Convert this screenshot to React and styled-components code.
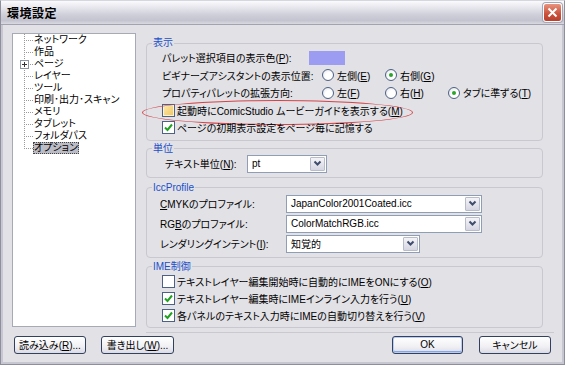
import styled, { createGlobalStyle } from "styled-components";

const GlobalStyle = createGlobalStyle`
  html, body { margin: 0; padding: 0; }
  body {
    width: 565px;
    height: 365px;
    overflow: hidden;
    font-family: "Liberation Sans", "Noto Sans CJK JP", sans-serif;
    font-size: 10px;
    font-feature-settings: "palt";
    color: #000;
  }
  * { box-sizing: border-box; }
`;

const Window = styled.div`
  width: 565px;
  height: 365px;
  display: flex;
  flex-direction: column;
  background: #c7c7d1;
  border: 1px solid #8e8e9c;
  border-top-color: #d6d6de;
`;

const TitleBar = styled.div`
  height: 24px;
  flex: none;
  display: flex;
  align-items: center;
  justify-content: space-between;
  padding: 0 2px 0 6px;
  background: linear-gradient(
    to bottom,
    #fbfbfd 0%,
    #e9e9ef 25%,
    #cfcfda 60%,
    #c4c4d0 85%,
    #d9d9e1 100%
  );
  border-bottom: 1px solid #a2a2b0;
`;

const Title = styled.span`
  font-family: "Noto Sans CJK JP", sans-serif;
  font-size: 12px;
  font-weight: bold;
  letter-spacing: 0.5px;
`;

const CloseButton = styled.span`
  width: 19px;
  height: 19px;
  display: flex;
  align-items: center;
  justify-content: center;
  border: 1px solid #fff;
  border-radius: 3px;
  background: linear-gradient(to bottom, #e8947f, #c9503a 60%, #b8402c);
  box-shadow: 0 0 0 1px #a6a6b4;
`;

const Body = styled.div`
  flex: 1;
  margin: 0 2px 2px;
  background: #e2e1e6;
  padding: 8px 10px 0 9px;
  display: flex;
  flex-direction: column;
`;

const Main = styled.div`
  display: flex;
  align-items: flex-start;
  gap: 10px;
`;

const Tree = styled.div`
  width: 124px;
  height: 294px;
  flex: none;
  background: #fff;
  border: 1px solid #a4abb7;
`;

const TreeItem = styled.div`
  display: flex;
  align-items: center;
  height: 12px;
  line-height: 12px;
  white-space: nowrap;
  overflow: hidden;
`;

const Connector = styled.span`
  width: 20px;
  height: 12px;
  flex: none;
  display: flex;
  align-items: center;
  background:
    repeating-linear-gradient(to bottom, #9a9a9a 0 1px, transparent 1px 2px)
      11px 0 / 1px ${(p) => (p.$last ? "7px" : "100%")} no-repeat,
    repeating-linear-gradient(to right, #9a9a9a 0 1px, transparent 1px 2px)
      11px 6px / 9px 1px no-repeat;
`;

const PlusBox = styled.span`
  width: 9px;
  height: 9px;
  margin-left: 7px;
  border: 1px solid #8c96a2;
  background: #fff;
  display: flex;
`;

const TreeLabel = styled.span`
  display: inline-block;
  height: 12px;
  line-height: 12px;
  padding: 0 1px;
  background: ${(p) => (p.$selected ? "#bcbcc6" : "transparent")};
  outline: ${(p) => (p.$selected ? "1px dotted #444" : "none")};
  outline-offset: -1px;
`;

const Pane = styled.div`
  flex: 1;
  padding: 4px 11px 4px 0;
  border-bottom: 1px solid #c9c9cf;
  display: flex;
  flex-direction: column;
`;

const Group = styled.fieldset`
  margin: ${(p) => p.$top || 0}px 0 0;
  padding: 0 4px ${(p) => p.$bottom || 3}px 4px;
  border: 1px solid #c9c8d0;
  border-radius: 4px;
  min-width: 0;
`;

const Legend = styled.legend`
  padding: 0 1px;
  margin-left: 1px;
  line-height: 12px;
  font-size: 10px;
  color: #1a4fc8;
`;

const Content = styled.div`
  padding-left: ${(p) => p.$indent}px;
`;

const Row = styled.div`
  position: relative;
  display: flex;
  align-items: center;
  height: ${(p) => p.$h}px;
  white-space: nowrap;
`;

const Label = styled.span`
  width: ${(p) => p.$w}px;
  flex: none;
`;

const Swatch = styled.span`
  width: 36px;
  height: 14px;
  background: #9c9cf2;
`;

const Option = styled.span`
  width: ${(p) => p.$w || 63}px;
  display: inline-flex;
  align-items: center;
  gap: 3px;
  flex: none;
`;

const Radio = styled.span`
  width: 12px;
  height: 12px;
  flex: none;
  border-radius: 50%;
  border: 1px solid #4d6185;
  background: radial-gradient(circle at 60% 60%, #fff 40%, #dcdce4 100%);
  display: flex;
  align-items: center;
  justify-content: center;
  &::after {
    content: "";
    width: 4px;
    height: 4px;
    border-radius: 50%;
    background: ${(p) => (p.$checked ? "#2aa52a" : "transparent")};
  }
`;

const Check = styled.span`
  width: 13px;
  height: 13px;
  flex: none;
  margin-right: 2px;
  border: 1px solid #4d6185;
  background: ${(p) =>
    p.$hot ? "linear-gradient(135deg, #fcebb0, #f2c45a)" : "#fff"};
  box-shadow: ${(p) => (p.$hot ? "inset 0 0 0 1px #fdf3d4" : "none")};
  display: flex;
  align-items: center;
  justify-content: center;
`;

const Ellipse = styled.span`
  position: absolute;
  left: -20px;
  top: -2px;
  width: 271px;
  height: 25px;
  border: 1.5px solid #d4454a;
  border-radius: 50%;
  pointer-events: none;
`;

const Select = styled.span`
  width: ${(p) => p.$w}px;
  height: 18px;
  flex: none;
  display: flex;
  align-items: center;
  justify-content: space-between;
  border: 1px solid #8f9db5;
  background: #fff;
  padding: 0 1px 0 4px;
`;

const Arrow = styled.span`
  width: 15px;
  height: 14px;
  display: flex;
  align-items: center;
  justify-content: center;
  border: 1px solid #b7bccb;
  border-radius: 1px;
  background: linear-gradient(to bottom, #f4f4f8, #d5d6e2);
`;

const ButtonRow = styled.div`
  margin-top: 3px;
  display: flex;
  justify-content: space-between;
  padding: 0 1px 0 2px;
`;

const ButtonGroup = styled.div`
  display: flex;
  gap: ${(p) => p.$gap}px;
`;

const Button = styled.span`
  width: ${(p) => p.$w}px;
  height: 18px;
  display: flex;
  align-items: center;
  justify-content: center;
  border: 1px solid #33415e;
  border-radius: 3px;
  background: linear-gradient(to bottom, #ffffff, #f0f0f4 60%, #dcdbe4);
  box-shadow: ${(p) =>
    p.$default ? "inset 0 0 0 1px #b9cdf3, inset 0 -1px 0 1px #86a6e6" : "none"};
  white-space: nowrap;
`;

const CheckMark = () => (
  <svg width="9" height="9" viewBox="0 0 9 9">
    <polyline points="1,4.5 3.5,7 8,1.5" fill="none" stroke="#21a121" strokeWidth="2" />
  </svg>
);

const Chevron = () => (
  <svg width="9" height="7" viewBox="0 0 9 7">
    <polyline points="1.5,1.5 4.5,4.5 7.5,1.5" fill="none" stroke="#3f4d6c" strokeWidth="2" />
  </svg>
);

const CloseX = () => (
  <svg width="11" height="11" viewBox="0 0 11 11">
    <path d="M1.5 1.5 L9.5 9.5 M9.5 1.5 L1.5 9.5" stroke="#fff" strokeWidth="2" />
  </svg>
);

const Plus = () => (
  <svg width="7" height="7" viewBox="0 0 7 7">
    <path d="M1 3.5 H6 M3.5 1 V6" stroke="#333" strokeWidth="1" />
  </svg>
);

const treeItems = [
  "ネットワーク",
  "作品",
  "ページ",
  "レイヤー",
  "ツール",
  "印刷･出力･スキャン",
  "メモリ",
  "タブレット",
  "フォルダパス",
  "オプション",
];

const Mn = ({ children }) => <u>{children}</u>;

const CheckRow = ({ checked, hot, children, h = 17.5 }) => (
  <Row $h={h}>
    <Check $hot={hot}>{checked && <CheckMark />}</Check>
    <span>{children}</span>
  </Row>
);

const RadioOption = ({ checked, w, children }) => (
  <Option $w={w}>
    <Radio $checked={checked} />
    <span>{children}</span>
  </Option>
);

const SelectBox = ({ w, value }) => (
  <Select $w={w}>
    <span>{value}</span>
    <Arrow>
      <Chevron />
    </Arrow>
  </Select>
);

export default function App() {
  return (
    <>
      <GlobalStyle />
      <Window>
        <TitleBar>
          <Title>環境設定</Title>
          <CloseButton>
            <CloseX />
          </CloseButton>
        </TitleBar>
        <Body>
          <Main>
            <Tree>
              {treeItems.map((item, i) => (
                <TreeItem key={item}>
                  <Connector $last={i === treeItems.length - 1}>
                    {item === "ページ" && (
                      <PlusBox>
                        <Plus />
                      </PlusBox>
                    )}
                  </Connector>
                  <TreeLabel $selected={item === "オプション"}>{item}</TreeLabel>
                </TreeItem>
              ))}
            </Tree>
            <Pane>
              <Group>
                <Legend>表示</Legend>
                <Content $indent={11}>
                  <Row $h={17.5}>
                    <Label $w={147}>
                      パレット選択項目の表示色(<Mn>P</Mn>):
                    </Label>
                    <Swatch />
                  </Row>
                  <Row $h={17.5}>
                    <Label $w={160}>ビギナーズアシスタントの表示位置:</Label>
                    <RadioOption>
                      左側(<Mn>E</Mn>)
                    </RadioOption>
                    <RadioOption checked>
                      右側(<Mn>G</Mn>)
                    </RadioOption>
                  </Row>
                  <Row $h={17.5}>
                    <Label $w={160}>プロパティパレットの拡張方向:</Label>
                    <RadioOption>
                      左(<Mn>F</Mn>)
                    </RadioOption>
                    <RadioOption>
                      右(<Mn>H</Mn>)
                    </RadioOption>
                    <RadioOption checked w={90}>
                      タブに準ずる(<Mn>T</Mn>)
                    </RadioOption>
                  </Row>
                  <Row $h={17.5}>
                    <Check $hot />
                    <span>
                      起動時にComicStudio ムービーガイドを表示する(<Mn>M</Mn>)
                    </span>
                    <Ellipse />
                  </Row>
                  <CheckRow checked>ページの初期表示設定をページ毎に記憶する</CheckRow>
                </Content>
              </Group>

              <Group $top={2} $bottom={4}>
                <Legend>単位</Legend>
                <Content $indent={14}>
                  <Row $h={18}>
                    <Label $w={82}>
                      テキスト単位(<Mn>N</Mn>):
                    </Label>
                    <SelectBox w={80} value="pt" />
                  </Row>
                </Content>
              </Group>

              <Group $top={4}>
                <Legend>IccProfile</Legend>
                <Content $indent={9}>
                  <Row $h={20}>
                    <Label $w={126}>
                      <Mn>C</Mn>MYKのプロファイル:
                    </Label>
                    <SelectBox w={196} value="JapanColor2001Coated.icc" />
                  </Row>
                  <Row $h={20}>
                    <Label $w={126}>
                      RG<Mn>B</Mn>のプロファイル:
                    </Label>
                    <SelectBox w={196} value="ColorMatchRGB.icc" />
                  </Row>
                  <Row $h={20}>
                    <Label $w={126}>
                      レンダリングインテント(<Mn>I</Mn>):
                    </Label>
                    <SelectBox w={134} value="知覚的" />
                  </Row>
                </Content>
              </Group>

              <Group $top={3}>
                <Legend>IME制御</Legend>
                <Content $indent={11}>
                  <CheckRow h={17}>
                    テキストレイヤー編集開始時に自動的にIMEをONにする(<Mn>O</Mn>)
                  </CheckRow>
                  <CheckRow h={17} checked>
                    テキストレイヤー編集時にIMEインライン入力を行う(<Mn>U</Mn>)
                  </CheckRow>
                  <CheckRow h={17} checked>
                    各パネルのテキスト入力時にIMEの自動切り替えを行う(<Mn>V</Mn>)
                  </CheckRow>
                </Content>
              </Group>
            </Pane>
          </Main>

          <ButtonRow>
            <ButtonGroup $gap={15}>
              <Button $w={72}>
                <span>
                  読み込み(<Mn>R</Mn>)...
                </span>
              </Button>
              <Button $w={73}>
                <span>
                  書き出し(<Mn>W</Mn>)...
                </span>
              </Button>
            </ButtonGroup>
            <ButtonGroup $gap={16}>
              <Button $w={71} $default>
                OK
              </Button>
              <Button $w={72}>キャンセル</Button>
            </ButtonGroup>
          </ButtonRow>
        </Body>
      </Window>
    </>
  );
}
